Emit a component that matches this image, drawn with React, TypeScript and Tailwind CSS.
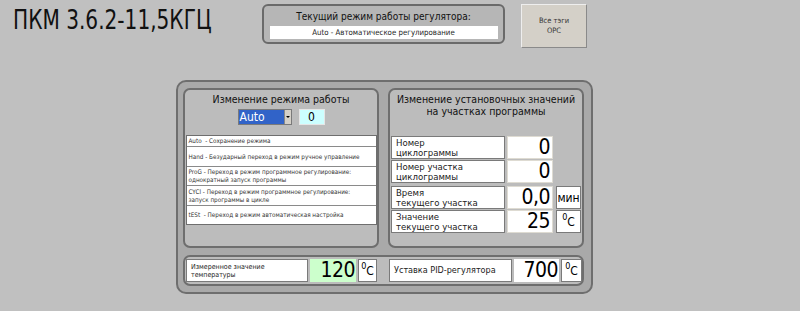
import React from "react";

const F = "font-['DejaVu_Sans_Condensed','DejaVu_Sans',sans-serif] whitespace-nowrap";

function Deg() {
  return (
    <span className="leading-none flex items-start">
      <span className="text-[9px] leading-none mt-[-3px]">0</span>
      <span>C</span>
    </span>
  );
}

function Row({ l1, l2, v, unit }: { l1: string; l2: string; v: string; unit?: React.ReactNode }) {
  return (
    <div className="flex items-stretch h-[23px] gap-[2px]">
      <div className="w-[114px] bg-white border border-[#7a7a7a] flex flex-col justify-center pl-[4px] text-[9.5px] leading-[10px] text-[#222]">
        <span>{l1}</span>
        <span>{l2}</span>
      </div>
      <div className="w-[46px] bg-white border border-[#dedbd2] flex items-center justify-end pr-[2px] text-[21px] leading-none text-black tracking-[-0.5px]">
        {v}
      </div>
      {unit ? (
        <div className="ml-[1px] w-[25px] bg-white border border-[#7a7a7a] flex items-center justify-center text-[12px] text-black">
          {unit}
        </div>
      ) : null}
    </div>
  );
}

export default function App() {
  const modes = [
    { t: "Auto  - Сохранение режима", h: "h-[10px]" },
    { t: "Hand - Безударный переход в режим ручное управление", h: "h-[20px]" },
    { t: "ProG - Переход в режим программное регулирование:\nоднократный запуск программы", h: "h-[19px]" },
    { t: "CYCl - Переход в режим программное регулирование:\nзапуск программы в цикле", h: "h-[20px]" },
    { t: "tESt  - Переход в режим автоматическая настройка", h: "h-[19px]" },
  ];
  return (
    <div className={`w-[800px] h-[311px] bg-[#c0c0c0] overflow-hidden ${F}`}>
      <div className="flex items-start h-[48px]">
        <div className="ml-[13px] mt-[5px] w-[249px] text-[26px] leading-[30px] text-[#111]">
          <span className="inline-block origin-left scale-x-[0.86]">ПКМ 3.6.2-11,5КГЦ</span>
        </div>
        <div className="mt-[4px] w-[243px] h-[40px] border-2 border-[#6a6a6a] rounded-[6px] bg-[#b6b6b6] flex flex-col items-center">
          <div className="text-[10px] leading-[13px] mt-[4px] text-[#111]">Текущий режим работы регулятора:</div>
          <div className="mt-[3px] w-[228px] h-[13px] bg-white text-[7.8px] leading-[13px] text-center text-[#222]">
            Auto - Автоматическое регулирование
          </div>
        </div>
        <div className="ml-[16px] mt-[4px] w-[66px] h-[44px] bg-[#d4d0c8] border border-t-[#eeeeee] border-l-[#eeeeee] border-r-[#8a8a8a] border-b-[#8a8a8a] flex flex-col items-center justify-center text-[7.5px] leading-[10px] text-[#333]">
          <span>Все тэги</span>
          <span>OPC</span>
        </div>
      </div>

      <div className="ml-[176px] mt-[32px] w-[417px] h-[214px] border-2 border-[#6e6e6e] rounded-[10px] bg-[#a9a9a9] pl-[5px] pt-[6px] flex flex-col gap-[7px]">
        <div className="flex gap-[9px]">
          <div className="w-[196px] h-[160px] border-2 border-[#6e6e6e] rounded-[7px] bg-[#bcbcbc] flex flex-col items-center">
            <div className="text-[10.5px] leading-[14px] mt-[2px] text-[#111]">Изменение режима работы</div>
            <div className="flex gap-[7px] mt-[3px]">
              <div className="flex h-[16px] border border-[#7a7a7a] bg-white">
                <div className="w-[45px] bg-[#3163c8] text-white text-[12px] leading-[14px] pl-[1px]">Auto</div>
                <div className="w-[7px] bg-[#d4d0c8] border-l border-[#888] flex items-center justify-center">
                  <div className="w-0 h-0 border-l-[2px] border-r-[2px] border-t-[2px] border-l-transparent border-r-transparent border-t-black"></div>
                </div>
              </div>
              <div className="w-[26px] h-[16px] bg-[#ccffff] border border-[#e6e6e6] text-[12px] leading-[14px] text-center text-black">0</div>
            </div>
            <div className="mt-[10px] w-[191px] bg-white border border-[#6e6e6e] flex flex-col">
              {modes.map((m, i) => (
                <div
                  key={i}
                  className={`${m.h} ${i > 0 ? "border-t border-[#8a8a8a]" : ""} flex items-center pl-[2px] text-[6.3px] leading-[8px] text-[#333] whitespace-pre`}
                >
                  {m.t}
                </div>
              ))}
            </div>
          </div>
          <div className="w-[196px] h-[160px] border-2 border-[#6e6e6e] rounded-[7px] bg-[#bcbcbc] flex flex-col">
            <div className="text-[10.5px] leading-[12px] mt-[3px] text-center text-[#111]">
              Изменение установочных значений
              <br />
              на участках программы
            </div>
            <div className="mt-[19px] ml-[1px] flex flex-col gap-[1px]">
              <Row l1="Номер" l2="циклограммы" v="0" />
              <Row l1="Номер участка" l2="циклограммы" v="0" />
              <div className="h-[1px]"></div>
              <Row l1="Время" l2="текущего участка" v="0,0" unit="мин" />
              <Row l1="Значение" l2="текущего участка" v="25" unit={<Deg />} />
            </div>
          </div>
        </div>
        <div className="w-[401px] h-[31px] border-2 border-[#6e6e6e] rounded-[7px] bg-[#bcbcbc] flex items-center pl-[1px] gap-[2px]">
          <div className="w-[122px] h-[23px] bg-white border border-[#7a7a7a] flex flex-col justify-center pl-[4px] text-[7px] leading-[8px] text-[#222]">
            <span>Измеренное значение</span>
            <span>температуры</span>
          </div>
          <div className="w-[46px] h-[23px] bg-[#ccffcc] flex items-center justify-end pr-[1px] text-[21px] leading-none tracking-[-0.5px] text-black">120</div>
          <div className="w-[19px] h-[23px] bg-white border border-[#7a7a7a] flex items-center justify-center text-[12px] text-black">
            <Deg />
          </div>
          <div className="ml-[10px] w-[123px] h-[23px] bg-white border border-[#7a7a7a] flex items-center pl-[4px] text-[9px] text-[#222]">
            Уставка PID-регулятора
          </div>
          <div className="w-[45px] h-[23px] bg-white flex items-center justify-end pr-[1px] text-[21px] leading-none tracking-[-0.5px] text-black">700</div>
          <div className="w-[21px] h-[23px] bg-white border border-[#7a7a7a] flex items-center justify-center text-[12px] text-black">
            <Deg />
          </div>
        </div>
      </div>
    </div>
  );
}
